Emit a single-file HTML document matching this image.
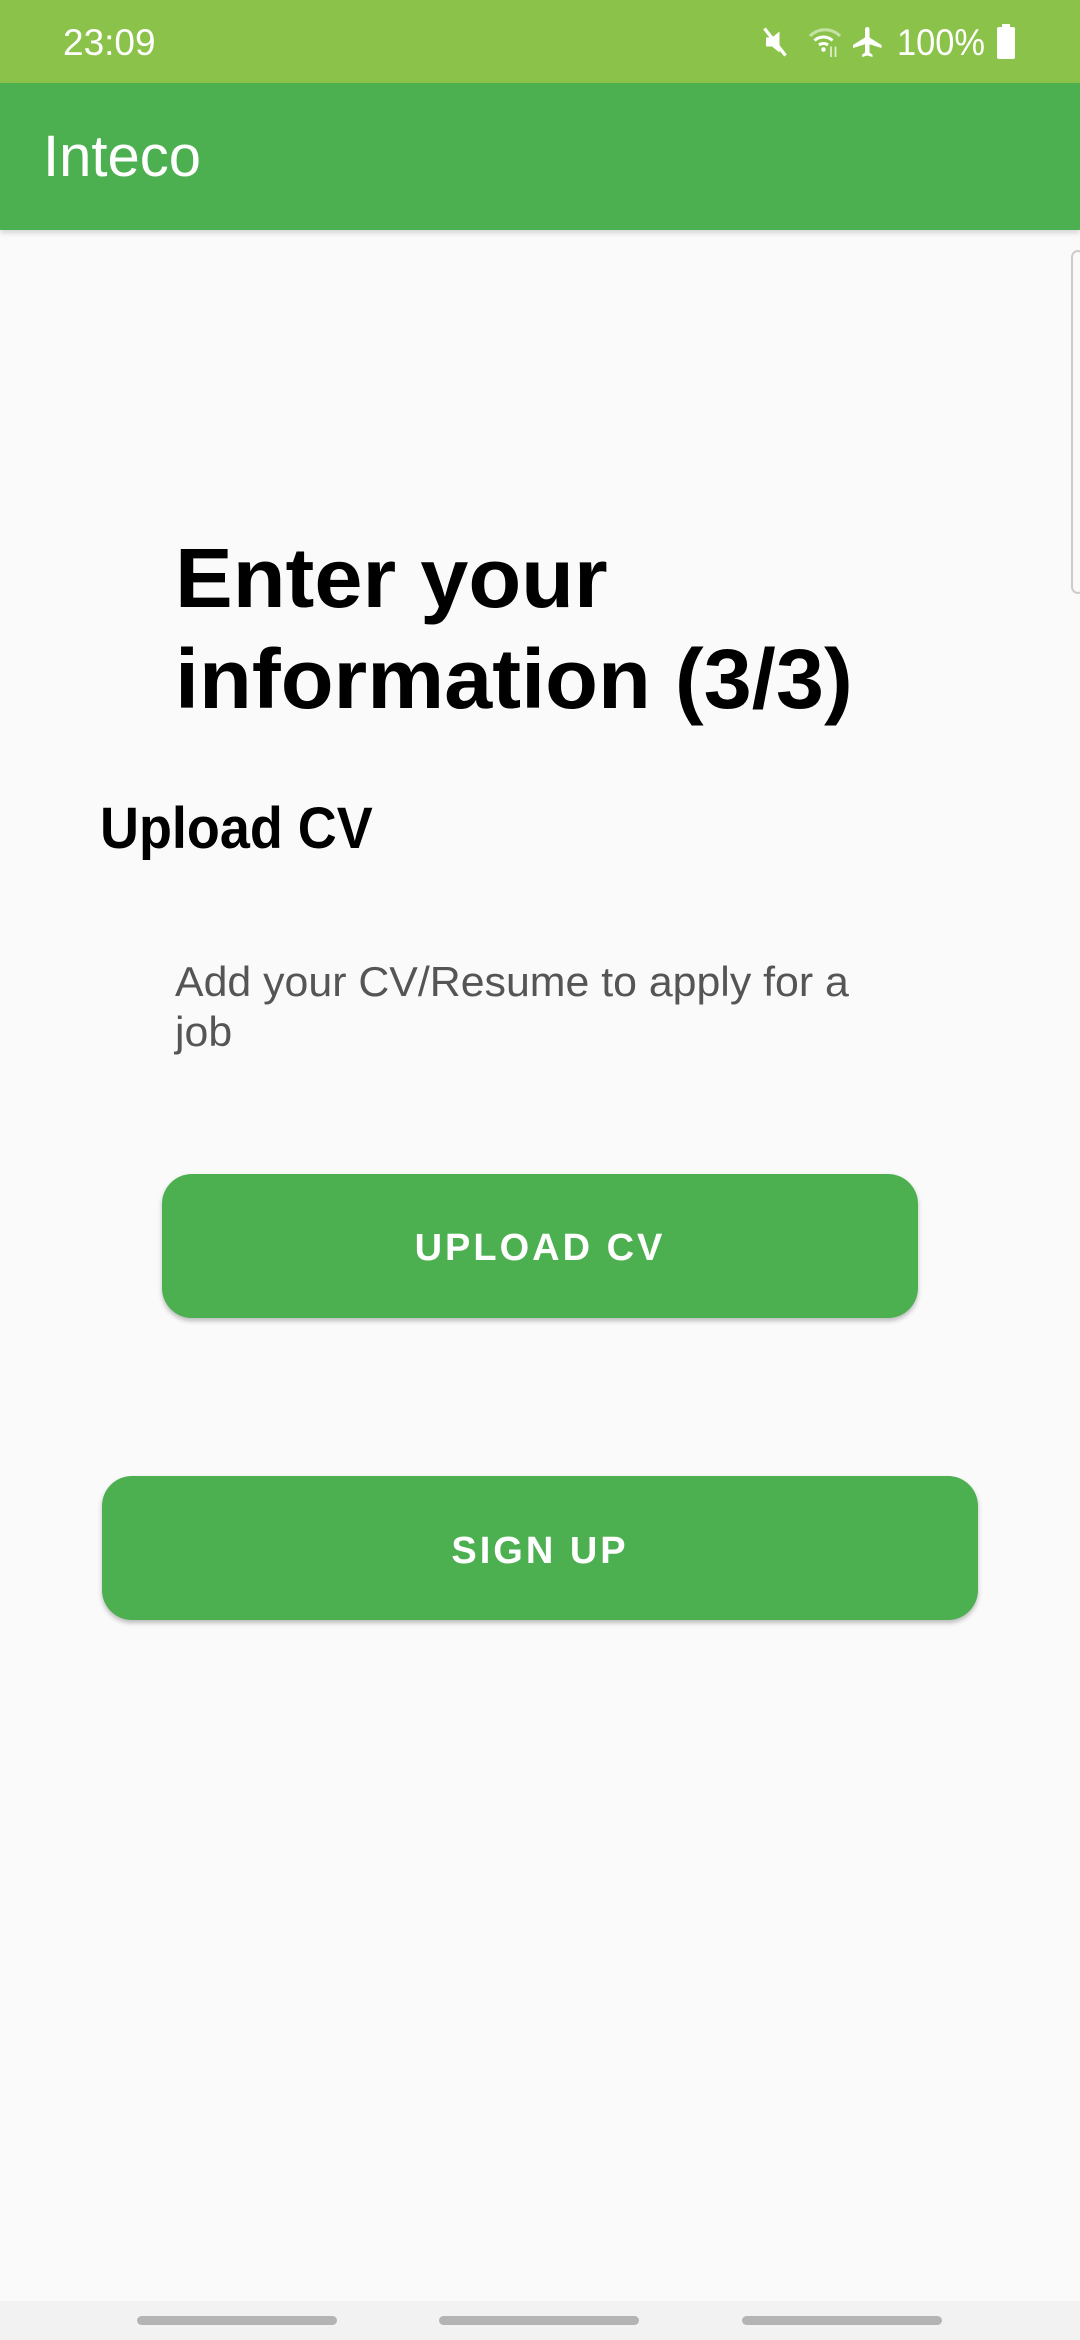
<!DOCTYPE html>
<html><head><meta charset="utf-8"><style>
*{margin:0;padding:0;box-sizing:border-box}
body{width:1080px;height:2340px;background:#fafafa;font-family:"Liberation Sans",sans-serif;position:relative;overflow:hidden}
.abs{position:absolute;white-space:nowrap}
.status{position:absolute;left:0;top:0;width:1080px;height:83px;background:#8bc34a}
.appbar{position:absolute;left:0;top:83px;width:1080px;height:147px;background:#4caf50;box-shadow:0 3px 5px rgba(0,0,0,0.15)}
.btn{position:absolute;background:#4caf50;border-radius:30px;box-shadow:0 3px 5px rgba(0,0,0,0.25);color:#fff;font-size:38px;font-weight:bold;letter-spacing:3px;text-align:center}
.nav{position:absolute;left:0;top:2301px;width:1080px;height:39px;background:#f2f2f2}
.pill{position:absolute;top:2316px;height:9px;border-radius:5px;background:#b4b4b4;width:200px}
</style></head><body>
<div class="status"></div>
<div class="abs" style="left:63px;top:22px;font-size:37px;color:#fff">23:09</div>
<svg class="abs" style="left:760px;top:24px" width="36" height="36" viewBox="0 0 24 24"><path d="M4 9h4l5-4v14l-5-4H4z" fill="#fff"/><path d="M3 3l14 18" stroke="#fff" stroke-width="2.2"/></svg>
<svg class="abs" style="left:806px;top:24px" width="38" height="36" viewBox="0 0 24 24"><path d="M2 8a14 14 0 0 1 20 0" stroke="#c5e1a5" stroke-width="2" fill="none"/><path d="M5 11a9 9 0 0 1 12 0" stroke="#fff" stroke-width="2" fill="none"/><path d="M8 14a5 5 0 0 1 6 0" stroke="#fff" stroke-width="2" fill="none"/><circle cx="11" cy="17" r="1.5" fill="#fff"/><path d="M16 15v7M19 22v-7" stroke="#dcedc8" stroke-width="1.2"/></svg>
<svg class="abs" style="left:850px;top:24px" width="36" height="36" viewBox="0 0 24 24"><path d="M21 16v-2l-8-5V3.5a1.5 1.5 0 0 0-3 0V9l-8 5v2l8-2.5V19l-2 1.5V22l3.5-1 3.5 1v-1.5L13 19v-5.5z" fill="#fff"/></svg>
<div class="abs" style="left:897px;top:22px;font-size:37px;color:#fff;transform:scaleX(0.93);transform-origin:left">100%</div>
<div class="abs" style="left:997px;top:27px;width:18px;height:32px;background:#fff;border-radius:2px"></div>
<div class="abs" style="left:1002px;top:24px;width:8px;height:4px;background:#fff"></div>
<div class="appbar"></div>
<div class="abs" style="left:43px;top:123px;font-size:58px;color:#fff">Inteco</div>
<div class="abs" style="left:1071px;top:250px;width:14px;height:344px;border:2px solid #ccc;border-radius:8px;background:#fafafa"></div>
<div class="abs" style="left:175px;top:528px;font-size:84px;font-weight:bold;line-height:101px;color:#000;transform:scaleX(1.03);transform-origin:left">Enter your<br>information (3/3)</div>
<div class="abs" style="left:100px;top:795px;font-size:58px;font-weight:bold;color:#000;transform:scaleX(0.93);transform-origin:left">Upload CV</div>
<div class="abs" style="left:175px;top:957px;font-size:42px;line-height:50px;color:#555;transform:scaleX(1.02);transform-origin:left">Add your CV/Resume to apply for a<br>job</div>
<div class="btn" style="left:162px;top:1174px;width:756px;height:144px;line-height:148px">UPLOAD CV</div>
<div class="btn" style="left:102px;top:1476px;width:876px;height:144px;line-height:150px">SIGN UP</div>
<div class="nav"></div>
<div class="pill" style="left:137px"></div>
<div class="pill" style="left:439px"></div>
<div class="pill" style="left:742px"></div>
</body></html>
